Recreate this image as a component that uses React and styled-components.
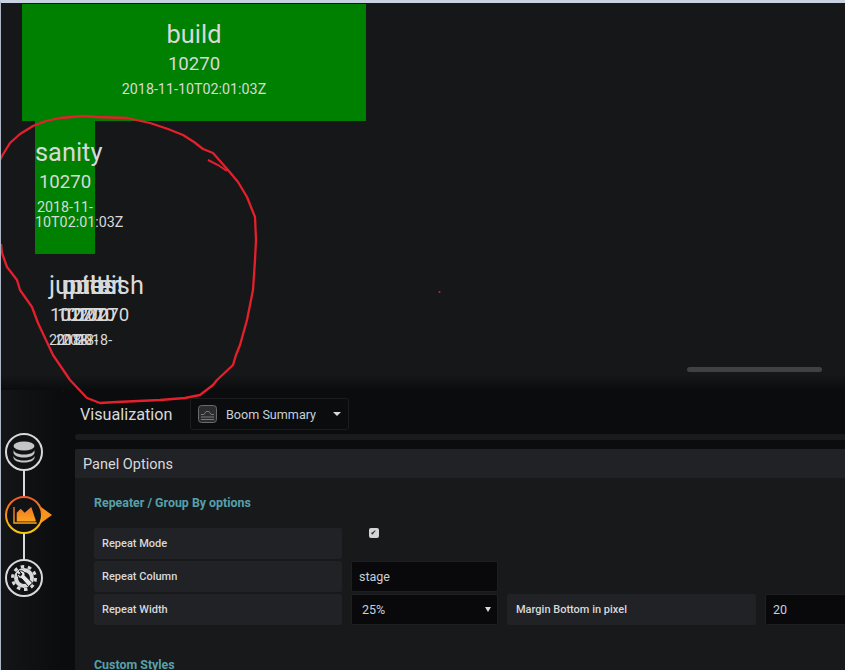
import React from 'react';
import styled, { createGlobalStyle } from 'styled-components';

const GlobalStyle = createGlobalStyle`
    html, body {
        margin: 0;
        padding: 0;
        background: #161719;
    }
    * {
        box-sizing: border-box;
    }
`;

const Page = styled.div`
    position: relative;
    width: 845px;
    height: 670px;
    overflow: hidden;
    background: #161719;
    border-top: 3px solid #c9d2e0;
    border-left: 1px solid #aeb6c6;
    font-family: Roboto, 'Liberation Sans', sans-serif;
    color: #d8d9da;
`;

const PanelArea = styled.div`
    position: relative;
    height: 387px;
    padding-top: 1px;
    background: linear-gradient(#161719 372px, #0b0c0e 100%);
`;

const Scrollbar = styled.div`
    position: absolute;
    left: 686px;
    top: 364px;
    width: 135px;
    height: 5px;
    border-radius: 3px;
    background: #404144;
`;

const StatPanel = styled.div`
    width: ${p => p.$width}px;
    height: ${p => p.$height}px;
    margin-left: ${p => p.$left}px;
    padding-top: ${p => p.$pad || 16}px;
    text-align: center;
    background: ${p => (p.$green ? 'green' : 'transparent')};
`;

const Title = styled.div`
    font-size: 25.4px;
    line-height: 30px;
`;

const Value = styled.div`
    font-size: 18.6px;
    line-height: 30px;
`;

const Stamp = styled.div`
    margin-top: 3px;
    font-size: 14.3px;
    line-height: 15px;
    color: #d8d9da;
    text-align: ${p => (p.$flush ? 'left' : 'center')};
`;

const PanelStack = styled.div`
    display: grid;
    ${StatPanel} {
        grid-area: 1 / 1;
    }
`;

const Editor = styled.div`
    display: flex;
    height: 280px;
`;

const Rail = styled.div`
    width: 61px;
    flex-shrink: 0;
    padding: 43px 0 0 4px;
    background: linear-gradient(90deg, #141517, #0b0c0e);
    display: flex;
    flex-direction: column;
    align-items: flex-start;
`;

const RailIcon = styled.svg`
    display: block;
    width: 38px;
    height: 38px;
    overflow: visible;
    flex-shrink: 0;
`;

const RailLine = styled.div`
    width: 2px;
    height: 25px;
    margin-left: 18px;
    background: #d8d9da;
`;

const Main = styled.div`
    flex: 1;
    min-width: 0;
    background: #0b0c0e;
    border-top-left-radius: 4px;
`;

const Toolbar = styled.div`
    display: flex;
    height: 44px;
    padding: 8px 0 0 18px;
`;

const ToolbarTitle = styled.div`
    width: 110px;
    font-size: 16.2px;
    line-height: 33px;
`;

const VizPicker = styled.div`
    display: flex;
    align-items: center;
    width: 159px;
    height: 32px;
    padding-left: 7px;
    border: 1px solid #1c1d20;
    border-radius: 3px;
    font-size: 12.6px;
    color: #c7d0d9;
`;

const VizIcon = styled.svg`
    width: 19px;
    height: 18px;
    margin-right: 9px;
`;

const Caret = styled.span`
    margin-left: 17px;
    border-left: 4.5px solid transparent;
    border-right: 4.5px solid transparent;
    border-top: 4.5px solid #d8d9da;
`;

const Strip = styled.div`
    height: 6px;
    margin: 0 0 9px 13px;
    background: #1a1b1d;
    border-radius: 3px 0 0 3px;
`;

const OptionsPanel = styled.div`
    margin-left: 13px;
    height: 230px;
    background: #18191b;
`;

const OptionsHeader = styled.div`
    height: 29px;
    padding-left: 8px;
    font-size: 14.5px;
    line-height: 31px;
    color: #d8d9da;
    background: #212226;
    border-top-left-radius: 3px;
`;

const OptionsBody = styled.div`
    padding: 17px 0 0 19px;
`;

const SectionTitle = styled.div`
    margin-top: ${p => p.$top || 0}px;
    font-size: 12.4px;
    font-weight: 700;
    line-height: 16px;
    color: #57a0aa;
`;

const Rows = styled.div`
    display: flex;
    flex-direction: column;
    gap: 2px;
    margin-top: 17px;
    width: 800px;
`;

const Row = styled.div`
    display: flex;
    gap: 9px;
    height: 31px;
`;

const Label = styled.div`
    flex-shrink: 0;
    width: ${p => p.$width || 248}px;
    padding-left: ${p => p.$pad || 8}px;
    font-size: 11px;
    font-weight: 500;
    line-height: 32px;
    color: #d8d9da;
    background: #212226;
    border-radius: 2px;
`;

const TextInput = styled.input`
    width: ${p => p.$width || 147}px;
    height: 31px;
    padding: 0 7px;
    flex-shrink: 0;
    font-family: inherit;
    font-size: 12.5px;
    color: #c7d0d9;
    background: #09090b;
    border: 1px solid #1e1f22;
    border-radius: 2px;
    outline: none;
`;

const SelectBox = styled.div`
    display: flex;
    align-items: center;
    justify-content: space-between;
    width: 147px;
    height: 31px;
    padding: 0 6px 0 10px;
    flex-shrink: 0;
    font-size: 12.5px;
    color: #c7d0d9;
    background: #09090b;
    border: 1px solid #1e1f22;
    border-radius: 2px;
`;

const SelectArrow = styled.span`
    border-left: 3px solid transparent;
    border-right: 3px solid transparent;
    border-top: 5px solid #d8d9da;
`;

const Check = styled.input.attrs({ type: 'checkbox' })`
    appearance: none;
    width: 10px;
    height: 10px;
    margin: 0 0 0 18px;
    flex-shrink: 0;
    position: relative;
    background: #d4d5d7;
    border-radius: 2px;
    &::after {
        content: '✔';
        position: absolute;
        left: 1.5px;
        top: 0;
        font-family: 'DejaVu Sans', sans-serif;
        font-size: 7px;
        line-height: 10px;
        color: #222;
    }
`;

const Scribble = styled.svg`
    position: absolute;
    left: -1px;
    top: -3px;
    pointer-events: none;
`;

const CIRCLE_PATH =
    'M0 160 L2 156 L10 143 L20 134 L33 126 L46 121 L60 118 L83 116 L97 117 L127 118 L150 123 L168 129 L183 135 L194 142 L203 149 L213 153 L220 161 L228 170 L238 182 L247 197 L255 217 L256 240 L255 260 L253 290 L247 320 L240 345 L236 355 L233 365 L217 380 L213 385 L200 395 L185 398 L160 400 L117 402 L100 403 L87 398 L70 380 L53 355 L38 323 L32 307 L20 290 L17 280 L7 267 L2 253 L1 244';

const stages = [
    { name: 'jupiter', left: 48 },
    { name: 'unit', left: 55 },
    { name: 'publish', left: 61 },
    { name: 'test', left: 75 },
];

const App = () => {
    return (
        <Page>
            <GlobalStyle />
            <PanelArea>
                <StatPanel $green $pad={15} $left={21} $width={344} $height={117}>
                    <Title>build</Title>
                    <Value>10270</Value>
                    <Stamp>2018-11-10T02:01:03Z</Stamp>
                </StatPanel>
                <StatPanel $green $left={34} $width={60} $height={133}>
                    <Title>sanity</Title>
                    <Value>10270</Value>
                    <Stamp>2018-11-10T02:01:03Z</Stamp>
                </StatPanel>
                <PanelStack>
                    {stages.map(s => (
                        <StatPanel key={s.name} $left={s.left} $width={54} $height={133}>
                            <Title>{s.name}</Title>
                            <Value>10270</Value>
                            <Stamp $flush>2018-</Stamp>
                        </StatPanel>
                    ))}
                </PanelStack>
                <Scrollbar />
            </PanelArea>
            <Editor>
                <Rail>
                    <RailIcon viewBox="0 0 38 38">
                        <circle cx="19" cy="19" r="18" fill="#111214" stroke="#d8d9da" strokeWidth="2" />
                        <ellipse cx="19" cy="13" rx="10.5" ry="4.5" fill="#c4c5c7" />
                        <path d="M8.5 17c1 3 5 4.5 10.5 4.5s9.5-1.5 10.5-4.500v3c-1 3-5 4.500-10.500 4.500s-9.500-1.500-10.500-4.500z" fill="#c4c5c7" />
                        <path d="M8.500 23c1 3 5 4.500 10.500 4.500s9.500-1.500 10.500-4.500v2c-1 3-5 4.500-10.500 4.500s-9.500-1.500-10.500-4.500z" fill="#c4c5c7" />
                    </RailIcon>
                    <RailLine />
                    <RailIcon viewBox="0 0 38 38">
                        <defs>
                            <linearGradient id="activeGrad" x1="0" y1="0" x2="0" y2="1">
                                <stop offset="0" stopColor="#f05a28" />
                                <stop offset="1" stopColor="#fbca0a" />
                            </linearGradient>
                            <linearGradient id="chartGrad" x1="0" y1="0" x2="0" y2="1">
                                <stop offset="0" stopColor="#f0752a" />
                                <stop offset="1" stopColor="#fba51a" />
                            </linearGradient>
                        </defs>
                        <path d="M36 11 L47 19 L36 27z" fill="#f7941d" />
                        <circle cx="19" cy="19" r="18" fill="#111214" stroke="url(#activeGrad)" strokeWidth="2" />
                        <path d="M9 11v16h22.700" fill="none" stroke="url(#chartGrad)" strokeWidth="1.400" />
                        <path d="M11.700 25.500v-8.800l4-4 4 4 6.600-5.700 4.400 13.300v1.200z" fill="url(#chartGrad)" />
                    </RailIcon>
                    <RailLine />
                    <RailIcon viewBox="0 0 38 38">
                        <circle cx="19" cy="19" r="18" fill="#111214" stroke="#d8d9da" strokeWidth="2" />
                        <circle cx="19" cy="19" r="8" fill="none" stroke="#d8d9da" strokeWidth="4" />
                        <circle cx="19" cy="19" r="11.500" fill="none" stroke="#d8d9da" strokeWidth="3" strokeDasharray="3.500 3.720" />
                        <path d="M14 12l3 3-1.500 2-3-2.500c-.5 2.500 1 5 4 5l7 8 4-3.500-7.500-7.500c.5-3-2-5.500-6-4.500z" fill="#e4e5e6" stroke="#111214" strokeWidth="1" />
                    </RailIcon>
                </Rail>
                <Main>
                    <Toolbar>
                        <ToolbarTitle>Visualization</ToolbarTitle>
                        <VizPicker>
                            <VizIcon viewBox="0 0 19 18">
                                <rect x="0.500" y="0.500" width="18" height="17" rx="3" fill="#2c2d30" stroke="#6a6b6e" />
                                <path d="M3 9.500h3l2-3h3l2 3h3M3 12h13M3 14.500h13" fill="none" stroke="#77787b" strokeWidth="1" />
                            </VizIcon>
                            Boom Summary
                            <Caret />
                        </VizPicker>
                    </Toolbar>
                    <Strip />
                    <OptionsPanel>
                        <OptionsHeader>Panel Options</OptionsHeader>
                        <OptionsBody>
                            <SectionTitle>Repeater / Group By options</SectionTitle>
                            <Rows>
                                <Row>
                                    <Label>Repeat Mode</Label>
                                    <Check defaultChecked />
                                </Row>
                                <Row>
                                    <Label>Repeat Column</Label>
                                    <TextInput readOnly value="stage" />
                                </Row>
                                <Row>
                                    <Label>Repeat Width</Label>
                                    <SelectBox>
                                        25%
                                        <SelectArrow />
                                    </SelectBox>
                                    <Label $width={249} $pad={9}>Margin Bottom in pixel</Label>
                                    <TextInput readOnly value="20" $width={120} />
                                </Row>
                            </Rows>
                            <SectionTitle $top={32}>Custom Styles</SectionTitle>
                        </OptionsBody>
                    </OptionsPanel>
                </Main>
            </Editor>
            <Scribble width="845" height="670" viewBox="0 0 845 670">
                <path d={CIRCLE_PATH} fill="none" stroke="#e3202b" strokeWidth="2.300" strokeLinejoin="round" />
                <path d="M208 160 L218 165 L227 171" fill="none" stroke="#e3202b" strokeWidth="2" />
                <circle cx="439.500" cy="292" r="1" fill="#d8202a" />
            </Scribble>
        </Page>
    );
};

export default App;
